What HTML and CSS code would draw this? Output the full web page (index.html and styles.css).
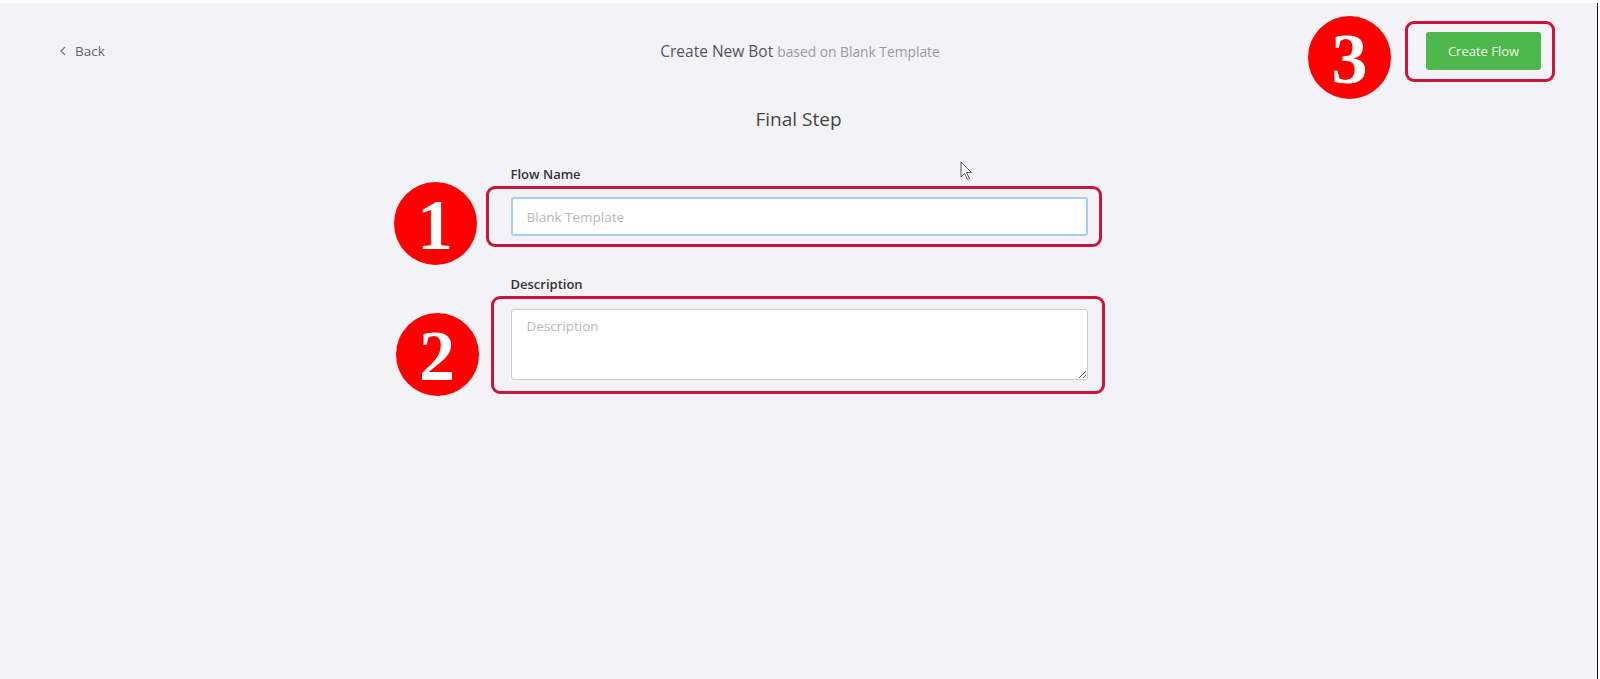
FILE: index.html
```html
<!DOCTYPE html>
<html lang="en">
<head>
    <meta charset="UTF-8">
    <meta name="viewport" content="width=device-width, initial-scale=1.0">
    <title>Create New Bot</title>
    <link rel="stylesheet" href="styles.css">
</head>
<body>
    <div class="app">
        <header class="topbar">
            <a class="back" href="#">
                <svg width="8" height="10" viewBox="0 0 8 10"><path d="M6 1 L2 5 L6 9" fill="none" stroke="#777" stroke-width="1.2"/></svg>
                Back
            </a>
            <div class="title">Create New Bot <span class="sub">based on Blank Template</span></div>
            <div class="actions">
                <div class="marked">
                    <span class="badge badge-3">3</span>
                    <span class="ring ring-3"></span>
                    <button class="btn-create" type="button">Create Flow</button>
                </div>
            </div>
        </header>

        <h2 class="step">Final Step</h2>

        <form class="flow-form">
            <label for="flowName">Flow Name</label>
            <div class="marked">
                <span class="badge badge-1">1</span>
                <span class="ring ring-1"></span>
                <input type="text" id="flowName" placeholder="Blank Template">
            </div>

            <label for="description" class="desc-label">Description</label>
            <div class="marked">
                <span class="badge badge-2">2</span>
                <span class="ring ring-2"></span>
                <textarea id="description" placeholder="Description"></textarea>
            </div>
        </form>

        <svg class="cursor" width="14" height="20" viewBox="0 0 14 20">
            <path d="M1 1 L1 16 L4.5 12.5 L7.5 18.5 L9.5 17.5 L6.5 11.5 L11.5 11.5 Z" fill="#fff" stroke="#555" stroke-width="1"/>
        </svg>
    </div>
</body>
</html>
```

FILE: styles.css
```css
body {
    margin: 0;
    padding: 0;
    background-color: #fff;
    font-family: "Open Sans", Arial, sans-serif;
}

.app {
    position: relative;
    width: 1598px;
    height: 676px;
    margin-top: 3px;
    background-color: #f3f2f7;
    border-right: 1px solid #111;
    box-sizing: border-box;
}

.topbar {
    display: grid;
    grid-template-columns: 1fr auto 1fr;
    align-items: center;
    padding: 29px 56px 0 59px;
}

.back {
    display: flex;
    align-items: center;
    gap: 8px;
    color: #666;
    font-size: 13.5px;
    text-decoration: none;
}

.title {
    color: #555;
    font-size: 15.5px;
}

.title .sub {
    color: #9a9a9f;
    font-size: 13.8px;
}

.actions {
    display: flex;
    justify-content: flex-end;
}

.btn-create {
    display: block;
    width: 115px;
    height: 38px;
    border: none;
    border-radius: 3px;
    background-color: #4db74b;
    color: #eef8ea;
    font-family: "Open Sans", Arial, sans-serif;
    font-size: 13px;
}

.step {
    margin: 37px 0 0;
    text-align: center;
    color: #444;
    font-size: 19px;
    font-weight: normal;
    line-height: 25px;
}

.flow-form {
    width: 577px;
    margin: 34px auto 0;
    padding-left: 1px;
}

.flow-form label {
    display: block;
    margin-bottom: 14px;
    color: #333;
    font-size: 13px;
    font-weight: 600;
    line-height: 17px;
}

.flow-form .desc-label {
    margin-top: 40px;
    margin-bottom: 16px;
}

.flow-form input,
.flow-form textarea {
    display: block;
    width: 100%;
    padding: 0 15px;
    border: 1px solid #ccc;
    border-radius: 3px;
    background: #fff;
    box-sizing: border-box;
    font-family: "Open Sans", Arial, sans-serif;
    font-size: 13.5px;
    color: #333;
}

.flow-form input {
    height: 39px;
    border: 2px solid #a9cfee;
    padding-left: 14px;
}

.flow-form textarea {
    height: 71px;
    padding-top: 7px;
    resize: vertical;
}

::placeholder {
    color: #b8b8bd;
}

/* annotations */
.marked {
    position: relative;
}

.ring {
    position: absolute;
    border: 3px solid #c8173a;
    border-radius: 9px;
    pointer-events: none;
}

.ring-1 { left: -25px; right: -14px; top: -11px; bottom: -11px; }
.ring-2 { left: -20px; right: -17px; top: -13px; bottom: -14px; }
.ring-3 { left: -21px; right: -14px; top: -11px; bottom: -12px; }

.badge {
    position: absolute;
    width: 83px;
    height: 83px;
    border-radius: 50%;
    background: radial-gradient(circle, #ff0000 82%, #d40000 100%);
    color: #fff;
    font-family: "Liberation Serif", "Times New Roman", serif;
    font-size: 72px;
    font-weight: bold;
    line-height: 86px;
    text-align: center;
}

.badge-1 { left: -117px; top: -15px; }
.badge-2 { left: -115px; top: 4px; }
.badge-3 { left: -118px; top: -16px; }

.cursor {
    position: absolute;
    left: 960px;
    top: 158px;
}
```
